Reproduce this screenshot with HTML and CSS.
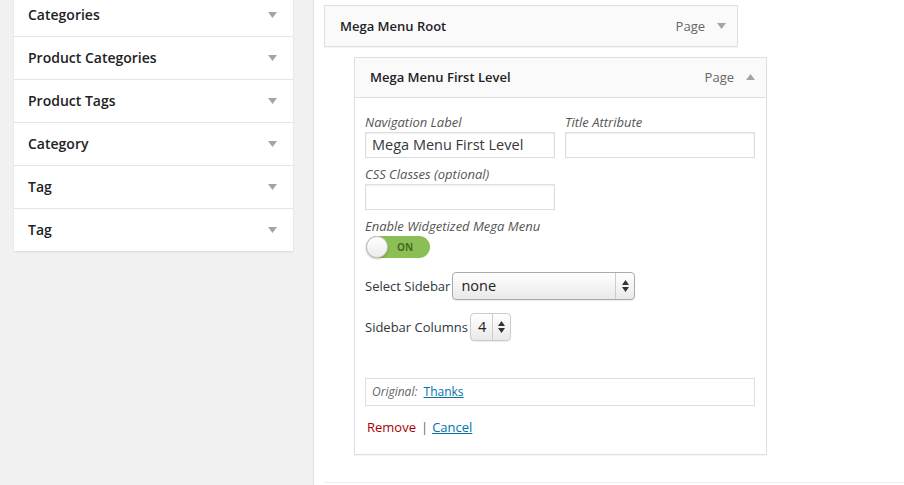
FILE: index.html
```html
<!DOCTYPE html>
<html>
<head>
<meta charset="utf-8">
<link rel="stylesheet" href="styles.css">
</head>
<body>
<div class="page">
  <aside class="side">
    <div class="acc">
      <div class="acc-row"><span>Categories</span><svg class="tri" width="9" height="6" viewBox="0 0 9 6"><path d="M0 0H9L4.5 6Z"/></svg></div>
      <div class="acc-row"><span>Product Categories</span><svg class="tri" width="9" height="6" viewBox="0 0 9 6"><path d="M0 0H9L4.5 6Z"/></svg></div>
      <div class="acc-row"><span>Product Tags</span><svg class="tri" width="9" height="6" viewBox="0 0 9 6"><path d="M0 0H9L4.5 6Z"/></svg></div>
      <div class="acc-row"><span>Category</span><svg class="tri" width="9" height="6" viewBox="0 0 9 6"><path d="M0 0H9L4.5 6Z"/></svg></div>
      <div class="acc-row"><span>Tag</span><svg class="tri" width="9" height="6" viewBox="0 0 9 6"><path d="M0 0H9L4.5 6Z"/></svg></div>
      <div class="acc-row"><span>Tag</span><svg class="tri" width="9" height="6" viewBox="0 0 9 6"><path d="M0 0H9L4.5 6Z"/></svg></div>
    </div>
  </aside>
  <main class="main">
    <div class="item root">
      <div class="item-head">
        <span class="item-title">Mega Menu Root</span>
        <span class="item-type">Page</span>
        <svg class="tri" width="9" height="6" viewBox="0 0 9 6"><path d="M0 0H9L4.5 6Z"/></svg>
      </div>
    </div>
    <div class="item child">
      <div class="item-head">
        <span class="item-title">Mega Menu First Level</span>
        <span class="item-type">Page</span>
        <svg class="tri" width="9" height="6" viewBox="0 0 9 6"><path d="M0 6H9L4.5 0Z"/></svg>
      </div>
      <div class="item-body">
        <div class="pair">
          <div class="field">
            <div class="lbl">Navigation Label</div>
            <div class="input">Mega Menu First Level</div>
          </div>
          <div class="field">
            <div class="lbl">Title Attribute</div>
            <div class="input"></div>
          </div>
        </div>
        <div class="field gap7">
          <div class="lbl">CSS Classes (optional)</div>
          <div class="input"></div>
        </div>
        <div class="field gap7">
          <div class="lbl">Enable Widgetized Mega Menu</div>
          <div class="toggle"><span class="knob"></span><span class="on">ON</span></div>
        </div>
        <div class="sel-row sidebar-row">
          <span class="sel-lbl">Select Sidebar</span>
          <div class="select wide"><span class="sel-val">none</span><span class="sel-arr"><svg width="7" height="12" viewBox="0 0 7 12"><path d="M0 5H7L3.5 0Z M0 7H7L3.5 12Z"/></svg></span></div>
        </div>
        <div class="sel-row cols-row">
          <span class="sel-lbl">Sidebar Columns</span>
          <div class="select narrow"><span class="sel-val">4</span><span class="sel-arr"><svg width="7" height="12" viewBox="0 0 7 12"><path d="M0 5H7L3.5 0Z M0 7H7L3.5 12Z"/></svg></span></div>
        </div>
        <div class="original"><em>Original:</em> <a href="#">Thanks</a></div>
        <div class="actions"><a class="remove" href="#">Remove</a><span class="sep">|</span><a class="cancel" href="#">Cancel</a></div>
      </div>
    </div>
    <div class="bottom-line"></div>
  </main>
</div>
</body>
</html>
```

FILE: styles.css
```css
* { box-sizing: border-box; }
html, body { margin: 0; padding: 0; height: 100%; }
body {
  font-family: "Open Sans", "Liberation Sans", sans-serif;
  color: #23282d;
  background: #fff;
  overflow: hidden;
}
.page {
  display: flex;
  height: 485px;
}
.side {
  width: 314px;
  flex: none;
  background: #f1f1f1;
  border-right: 1px solid #e2e2e2;
  padding-left: 14px;
  padding-right: 20px;
}
.acc {
  margin-top: -6px;
  background: #fff;
  box-shadow: 0 1px 2px rgba(0,0,0,0.1);
}
.acc-row {
  height: 43px;
  border-bottom: 1px solid #e5e5e5;
  display: flex;
  align-items: center;
  justify-content: space-between;
  padding: 0 16px 2px 14px;
  font-size: 14px;
  font-weight: 600;
  color: #1e2226;
}
.acc-row .tri { margin-top: 1px; }
.acc-row:last-child { border-bottom: none; height: 42px; }
.tri { fill: #a0a5aa; flex: none; }
.main {
  flex: 1;
  padding: 5px 0 0 10px;
  display: flex;
  flex-direction: column;
}
.item {
  width: 414px;
  border: 1px solid #dfdfdf;
  background: #fff;
  box-shadow: 0 1px 1px rgba(0,0,0,0.04);
}
.item-head {
  height: 40px;
  background: #fafafa;
  display: flex;
  align-items: center;
  padding: 0 11px 1px 15px;
  font-size: 13px;
}
.item-title { font-weight: 600; color: #1e2226; flex: 1; }
.item-type { color: #666; margin-right: 12px; }
.child { margin-left: 30px; margin-top: 10px; width: 413px; }
.child .item-head { border-bottom: 1px solid #dfdfdf; height: 40px; }
.item-body {
  padding: 15px 12px 0 10px;
  height: 356px;
}
.pair { display: flex; gap: 10px; }
.lbl {
  font-size: 13px;
  font-style: italic;
  color: #555;
  line-height: 18px;
  margin-bottom: 1px;
}
.input {
  width: 190px;
  height: 26px;
  border: 1px solid #ddd;
  box-shadow: inset 0 1px 2px rgba(0,0,0,0.07);
  font-size: 14.5px;
  line-height: 24px;
  padding-left: 6px;
  color: #32373c;
}
.gap7 { margin-top: 7px; }
.toggle {
  width: 64px;
  height: 22px;
  position: relative;
  margin-left: 1px;
  background: #8bbf56;
  border-radius: 11px;
  display: flex;
  align-items: center;
}
.knob {
  position: absolute;
  left: 0;
  top: 0;
  width: 22px;
  height: 22px;
  border-radius: 50%;
  background: linear-gradient(#fff, #ececec);
  border: 1px solid #c8c8c8;
  box-shadow: 0 1px 2px rgba(0,0,0,0.25);
}
.on {
  margin-left: 31px;
  font-size: 10px;
  font-weight: 700;
  color: #466b22;
}
.sel-row {
  display: flex;
  align-items: center;
  font-size: 13px;
  color: #32373c;
}
.sidebar-row { margin-top: 14px; }
.cols-row { margin-top: 13px; }
.sel-lbl { margin-right: 2px; }
.select {
  height: 28px;
  border: 1px solid #aaa;
  border-radius: 4px;
  background: linear-gradient(#fff, #f2f2f2 60%, #e9e9e9);
  display: flex;
  align-items: stretch;
  box-shadow: 0 1px 1px rgba(0,0,0,0.08);
}
.select.wide { width: 183px; }
.select.narrow { width: 41px; border-color: #ccc; }
.sel-val {
  flex: 1;
  font-size: 14.5px;
  line-height: 26px;
  padding-left: 8px;
  color: #222;
}
.narrow .sel-val { padding-left: 7px; }
.sel-arr {
  width: 19px;
  border-left: 1px solid #ccc;
  display: flex;
  align-items: center;
  justify-content: center;
}
.sel-arr svg { fill: #333; }
.narrow .sel-arr { width: 18px; }
.original {
  margin-top: 37px;
  width: 390px;
  height: 28px;
  border: 1px solid #dfdfdf;
  font-size: 12px;
  line-height: 26px;
  padding-left: 6px;
  color: #666;
}
.original a { color: #0073aa; text-decoration: underline; margin-left: 3px; }
.actions {
  margin-top: 11px;
  font-size: 13px;
  line-height: 20px;
  padding-left: 2px;
}
.remove { color: #a00; text-decoration: none; }
.sep { color: #666; margin: 0 4px 0 5px; }
.cancel { color: #0073aa; text-decoration: underline; }
.bottom-line {
  margin-top: 27px;
  border-top: 1px solid #eee;
}
```
